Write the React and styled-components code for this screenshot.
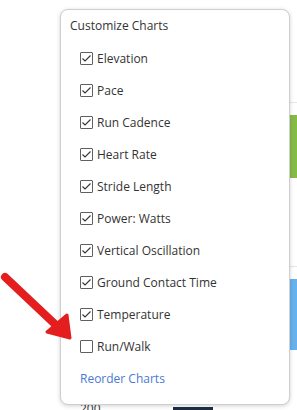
import React from 'react';
import styled, { createGlobalStyle } from 'styled-components';

const GlobalStyle = createGlobalStyle`
  html, body {
    margin: 0;
    padding: 0;
    background: #fff;
  }
  body {
    font-family: "Open Sans", "Liberation Sans", sans-serif;
  }
`;

const Page = styled.div`
  position: relative;
  width: 297px;
  height: 410px;
  overflow: hidden;
  background: #fff;
`;

const Backdrop = styled.div`
  display: flex;
  flex-direction: column;
  padding-top: 102px;
  padding-left: 280px;
`;

const ChartRow = styled.div`
  height: 151px;
  border-top: 1px solid #e6e6e6;
  display: flex;
  flex-direction: column;
  padding-top: ${({ offset }) => offset}px;
`;

const Bar = styled.div`
  height: ${({ size }) => size}px;
  background: ${({ color }) => color};
`;

const Footer = styled.div`
  position: absolute;
  left: 0;
  right: 0;
  top: 403px;
  height: 7px;
  display: flex;
  align-items: flex-start;
  padding-left: 80px;
  gap: 72px;
`;

const AxisLabel = styled.span`
  font-size: 12px;
  line-height: 12px;
  color: #333;
`;

const DarkBlock = styled.div`
  width: 40px;
  height: 7px;
  margin-top: 4px;
  background: #1f2d44;
`;

const Popover = styled.div`
  position: absolute;
  left: 60px;
  top: 9px;
  width: 230px;
  height: 396px;
  box-sizing: border-box;
  background: #fff;
  border: 1px solid #cfcfcf;
  border-radius: 8px;
  box-shadow: 0 1px 4px rgba(0, 0, 0, 0.18);
  padding: 6px 0 0 9px;
  display: flex;
  flex-direction: column;
`;

const Title = styled.div`
  font-size: 12px;
  line-height: 20px;
  color: #333;
  margin-bottom: 6px;
`;

const List = styled.ul`
  list-style: none;
  margin: 0;
  padding: 0 0 0 10px;
  display: flex;
  flex-direction: column;
`;

const Row = styled.li`
  height: 32px;
  display: flex;
  align-items: center;
  gap: 4px;
  font-size: 12px;
  color: #333;
`;

const Box = styled.span`
  width: 13px;
  height: 13px;
  box-sizing: border-box;
  border: 1px solid #5f5f5f;
  border-radius: 1px;
  background: #fff;
  display: flex;
  align-items: center;
  justify-content: center;
`;

const Link = styled.li`
  height: 32px;
  display: flex;
  align-items: center;
  font-size: 12px;
  color: #4a78d4;
`;

const Arrow = styled.svg`
  position: absolute;
  left: 0;
  top: 265px;
`;

const items = [
  ['Elevation', true],
  ['Pace', true],
  ['Run Cadence', true],
  ['Heart Rate', true],
  ['Stride Length', true],
  ['Power: Watts', true],
  ['Vertical Oscillation', true],
  ['Ground Contact Time', true],
  ['Temperature', true],
  ['Run/Walk', false],
];

const Checkbox = ({ checked }) => (
  <Box>
    {checked && (
      <svg width="11" height="11" viewBox="0 0 11 11">
        <polyline points="1.5,5.5 4,8 9.5,2.5" fill="none" stroke="#333" strokeWidth="1.1" />
      </svg>
    )}
  </Box>
);

const App = () => (
  <Page>
    <GlobalStyle />
    <Backdrop>
      <ChartRow offset={12}>
        <Bar size={63} color="#86bb48" />
      </ChartRow>
      <ChartRow offset={12}>
        <Bar size={71} color="#67b2ec" />
      </ChartRow>
    </Backdrop>
    <Footer>
      <AxisLabel>200</AxisLabel>
      <DarkBlock />
    </Footer>
    <Popover>
      <Title>Customize Charts</Title>
      <List>
        {items.map(([label, checked]) => (
          <Row key={label}>
            <Checkbox checked={checked} />
            {label}
          </Row>
        ))}
        <Link>Reorder Charts</Link>
      </List>
    </Popover>
    <Arrow width="80" height="80" viewBox="0 0 80 80">
      <line x1="5" y1="12" x2="58" y2="62" stroke="#e41e1e" strokeWidth="8" strokeLinecap="round" />
      <polygon points="47,67 67,50 70,73" fill="#e41e1e" stroke="#e41e1e" strokeWidth="3" strokeLinejoin="round" />
    </Arrow>
  </Page>
);

export default App;
